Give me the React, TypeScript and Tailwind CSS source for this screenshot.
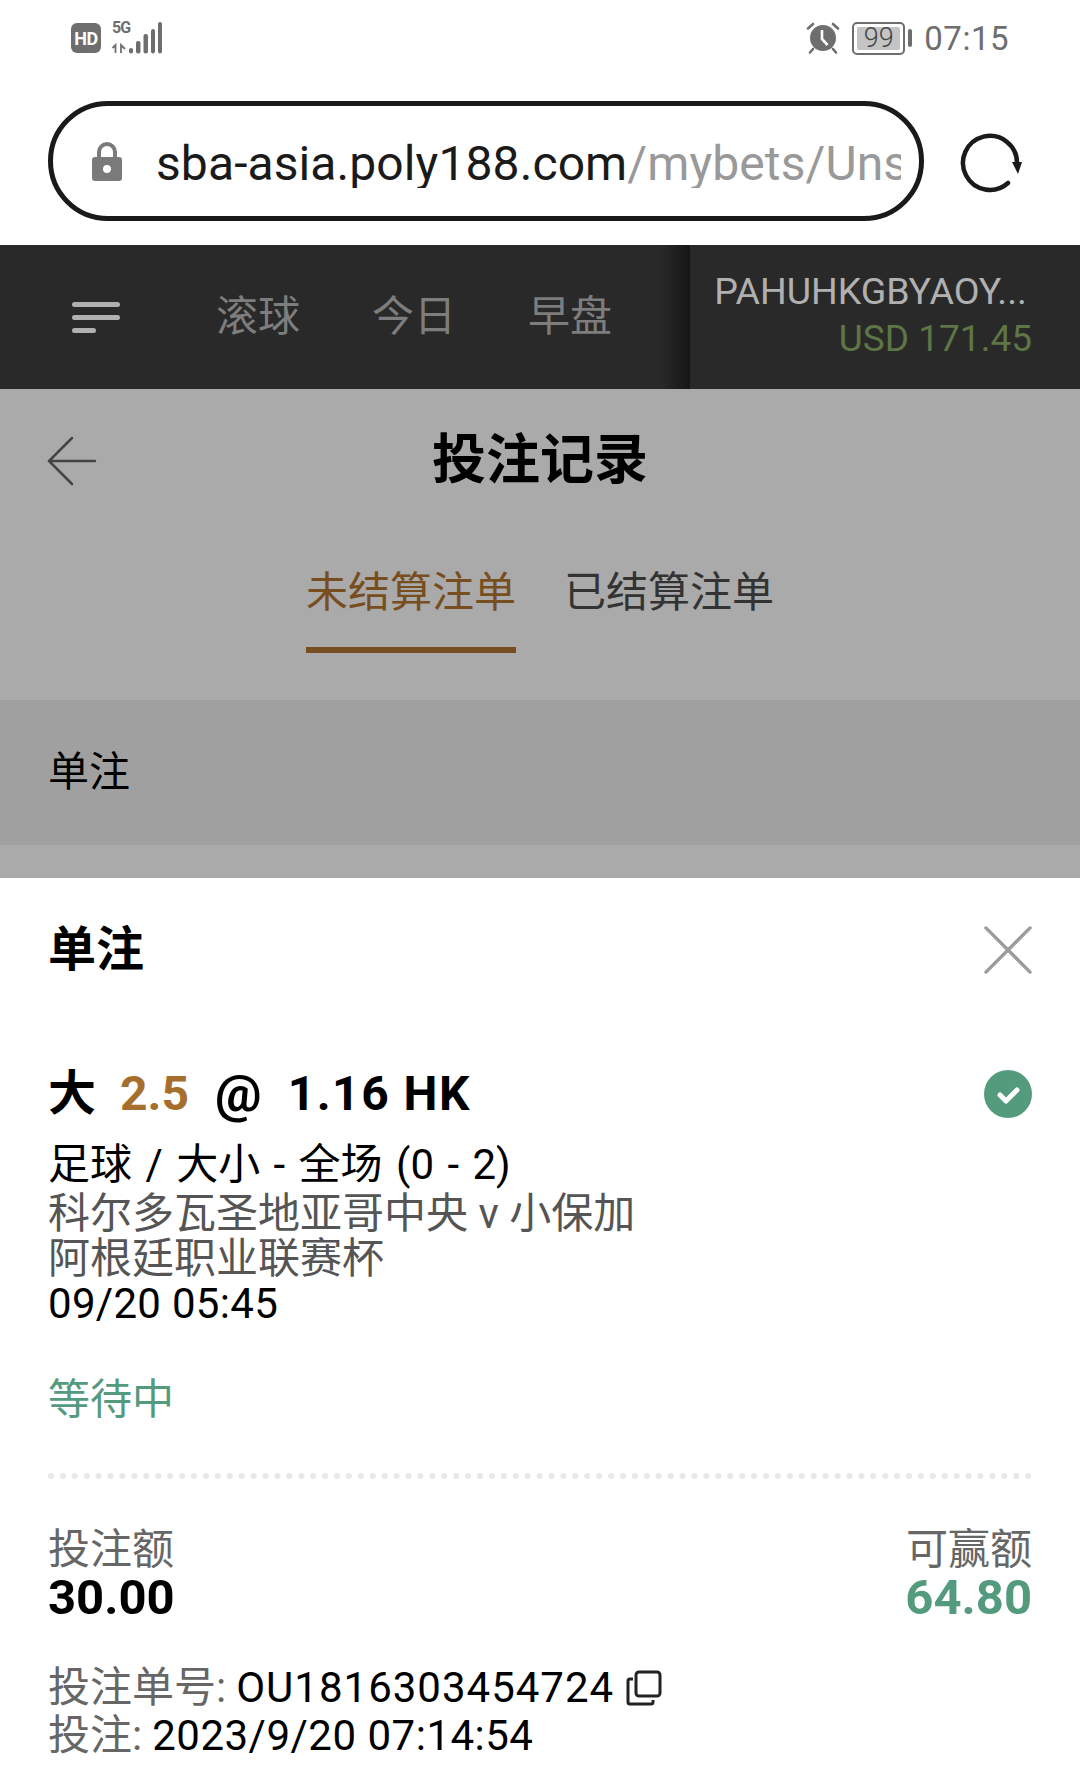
import React from 'react';

const sans = "font-['Roboto','Noto_Sans_CJK_SC',sans-serif]";

const AlarmIcon = () => (
  <svg width="34" height="32" viewBox="0 0 34 32" className="mr-[12px]">
    <circle cx="17" cy="16" r="13" fill="#6e6e6e" />
    <path d="M16 8v9l5.5 6" stroke="#fff" strokeWidth="2.6" fill="none" />
    <path d="M2 6.500 7 2M32 6.500 27 2M7 27l-3 3.500M27 27l3 3.500" stroke="#6e6e6e" strokeWidth="2.6" strokeLinecap="round" />
  </svg>
);

const SignalIcon = () => (
  <svg width="50" height="32" viewBox="0 0 50 32">
    <path d="M3.500 31v-8l-3 3M9 31v-8l4 4" stroke="#6e6e6e" strokeWidth="1.800" fill="none" />
    <rect x="17" y="26" width="4" height="5.500" rx="2" fill="#6e6e6e" />
    <rect x="24" y="19" width="4.500" height="12.500" rx="2" fill="#6e6e6e" />
    <rect x="31.500" y="12" width="4.500" height="19.500" rx="2" fill="#6e6e6e" />
    <rect x="39" y="7" width="4" height="24.500" rx="2" fill="#6e6e6e" />
    <rect x="46" y="0" width="4" height="31.500" rx="2" fill="#6e6e6e" />
  </svg>
);

const ReloadIcon = () => (
  <svg width="64" height="60" viewBox="0 0 64 60">
    <path d="M48 50A27 27 0 1 1 57 30" stroke="#1a1a1a" strokeWidth="4.500" fill="none" strokeLinecap="round" />
    <path d="M52 29h10l-4 12z" fill="#1a1a1a" />
  </svg>
);

const Header = () => (
  <div className="bg-white h-[245px] flex flex-col">
    <div className="h-[76px] flex items-center justify-between pl-[71px] pr-[71px]">
      <div className="flex items-center gap-[11px]">
        <div className={`w-[30px] h-[30px] rounded-[6px] bg-[#6e6e6e] text-white text-[18px] font-bold flex items-center justify-center tracking-[-0.5px] ${sans}`}>HD</div>
        <div className="relative">
          <span className={`absolute left-0 top-[-2px] text-[#6e6e6e] text-[16px] font-bold tracking-[-1px] leading-[16px] ${sans}`}>5G</span>
          <SignalIcon />
        </div>
      </div>
      <div className="flex items-center">
        <AlarmIcon />
        <div className="relative w-[53px] h-[33px] rounded-[5px] border-2 border-[#6e6e6e] p-[3px] mr-[3px]">
          <div className="h-full w-full bg-[#c4c4c4] rounded-[2px]" />
          <span className={`absolute inset-0 flex items-center justify-center text-[#444] text-[27px] font-light leading-none ${sans}`}>99</span>
        </div>
        <div className="w-[4px] h-[18px] rounded bg-[#6e6e6e] mr-[12px]" />
        <span className={`text-[#6e6e6e] text-[33px] leading-none tracking-[0.5px] ${sans}`}>07:15</span>
      </div>
    </div>
    <div className="flex items-center pl-[48px] mt-[25px]">
      <div className="w-[876px] h-[120px] rounded-full border-[5px] border-[#1a1a1a] flex items-center pl-[39px] pr-[18px]">
        <svg width="30" height="40" viewBox="0 0 30 40" className="shrink-0">
          <path d="M7 18V11a8 8 0 0 1 16 0v7" stroke="#7a7a7a" strokeWidth="4" fill="none" />
          <path fillRule="evenodd" d="M3 16h24a3 3 0 0 1 3 3v18a3 3 0 0 1-3 3H3a3 3 0 0 1-3-3V19a3 3 0 0 1 3-3zM15 24a4 4 0 1 0 0 8 4 4 0 0 0 0-8z" fill="#7a7a7a" />
        </svg>
        <div className={`ml-[34px] pt-[6px] overflow-hidden whitespace-nowrap text-[48px] tracking-[0.1px] leading-none text-[#1a1a1a] ${sans}`}>
          sba-asia.poly188.com<span className="text-[#999]">/mybets/UnsettledBets</span>
        </div>
      </div>
      <div className="ml-[36px] mt-[3px]"><ReloadIcon /></div>
    </div>
  </div>
);

const Nav = () => (
  <div className="h-[144px] bg-[#292929] flex">
    <div className="w-[690px] flex items-center pl-[72px] relative">
      <div className="flex flex-col gap-[8px] w-[48px] mr-[96px]">
        <div className="h-[5px] rounded bg-[#b0b0b0]" />
        <div className="h-[5px] rounded bg-[#b0b0b0]" />
        <div className="h-[5px] w-[24px] rounded bg-[#b0b0b0]" />
      </div>
      <div className={`flex gap-[72px] text-[42px] text-[#7d7d7d] leading-none ${sans}`}>
        <span>滚球</span>
        <span>今日</span>
        <span>早盘</span>
      </div>
      <div className="absolute right-0 top-0 bottom-0 w-[30px] bg-gradient-to-r from-transparent to-[#161616]" />
    </div>
    <div className={`flex-1 flex flex-col items-end justify-center pr-[48px] pb-[4px] ${sans}`}>
      <div className="text-[37.5px] leading-[48px] text-[#b0b0b0] mr-[5px]">PAHUHKGBYAOY...</div>
      <div className="text-[37px] leading-[48px] text-[#5e7545]">USD 171.45</div>
    </div>
  </div>
);

const PageBehind = () => (
  <div className={`bg-[#aaaaaa] h-[489px] flex flex-col ${sans}`}>
    <div className="h-[144px] flex items-center justify-center relative">
      <svg width="50" height="50" viewBox="0 0 50 50" className="absolute left-[47px] top-[47px]">
        <path d="M25 2 2 25l23 23M2 25h46" stroke="#444" strokeWidth="2.500" fill="none" strokeLinecap="round" />
      </svg>
      <span className="text-[54px] font-bold text-black leading-none">投注记录</span>
    </div>
    <div className="h-[167px] flex justify-center gap-[48px] text-[42px] leading-none">
      <div className="h-[120px] w-[210px] pt-[39px] border-b-[6px] border-[#774e20] text-[#774e20] whitespace-nowrap text-center">未结算注单</div>
      <div className="pt-[39px] text-[#333] whitespace-nowrap w-[210px] text-center">已结算注单</div>
    </div>
    <div className="h-[145px] bg-[#a0a0a0] flex items-center pl-[48px] text-[41px] leading-none text-black">单注</div>
  </div>
);

const Sheet = () => (
  <div className={`bg-white h-[914px] px-[48px] ${sans}`}>
    <div className="flex items-center justify-between h-[144px]">
      <span className="text-[48px] font-bold leading-none text-black">单注</span>
      <svg width="48" height="48" viewBox="0 0 50 50">
        <path d="M2 2l46 46M48 2 2 48" stroke="#9c9c9c" strokeWidth="3.500" strokeLinecap="round" />
      </svg>
    </div>
    <div className="flex items-center justify-between mt-[46px]">
      <div className="flex items-center text-[48px] font-bold leading-none text-black">
        <span>大</span>
        <span className="text-[#a76f2d] ml-[24px]">2.5</span>
        <span className="ml-[26px] text-[52px]">@</span>
        <span className="ml-[26px] tracking-[1.500px]">1.16 HK</span>
      </div>
      <svg width="48" height="48" viewBox="0 0 48 48">
        <circle cx="24" cy="24" r="24" fill="#549a7d" />
        <path d="M16 25l6 6 11-11" stroke="#fff" strokeWidth="5" fill="none" strokeLinecap="round" strokeLinejoin="round" />
      </svg>
    </div>
    <div className="mt-[22px] text-[42px] leading-[45px] text-black">
      <div className="mb-[4px] [word-spacing:3px]">足球 / 大小 - 全场 (0 - 2)</div>
      <div className="text-[#555]">科尔多瓦圣地亚哥中央 v 小保加</div>
      <div className="text-[#555]">阿根廷职业联赛杯</div>
      <div className="tracking-[0.3px]">09/20 05:45</div>
    </div>
    <div className="mt-[50px] text-[42px] leading-[48px] text-[#549a7d]">等待中</div>
    <div className="mt-[49px] h-[6px] border-t-[6px] border-dotted border-[#e8e8e8]" />
    <div className="flex justify-between mt-[47px]">
      <div>
        <div className="text-[42px] leading-[48px] text-[#666]">投注额</div>
        <div className="text-[49px] leading-[48px] font-bold text-black">30.00</div>
      </div>
      <div className="text-right">
        <div className="text-[42px] leading-[48px] text-[#666]">可赢额</div>
        <div className="text-[49px] leading-[48px] font-bold text-[#549a7d]">64.80</div>
      </div>
    </div>
    <div className="mt-[42px] text-[42px] leading-[48px] text-black">
      <div className="flex items-center">
        <span className="text-[#666]">投注单号:</span>
        <span className="ml-[10px] tracking-[1px]">OU1816303454724</span>
        <svg width="36" height="36" viewBox="0 0 36 36" className="ml-[12px]">
          <rect x="10" y="2" width="24" height="24" rx="3" fill="none" stroke="#222" strokeWidth="3" />
          <path d="M7 9H4a2 2 0 0 0-2 2v21a2 2 0 0 0 2 2h21a2 2 0 0 0 2-2v-2" fill="none" stroke="#222" strokeWidth="3" />
        </svg>
      </div>
      <div>
        <span className="text-[#666]">投注:</span>
        <span className="ml-[10px] tracking-[0.5px]">2023/9/20 07:14:54</span>
      </div>
    </div>
  </div>
);

export default function App() {
  return (
    <div className="w-[1080px] h-[1792px] overflow-hidden bg-white">
      <Header />
      <Nav />
      <PageBehind />
      <Sheet />
    </div>
  );
}
